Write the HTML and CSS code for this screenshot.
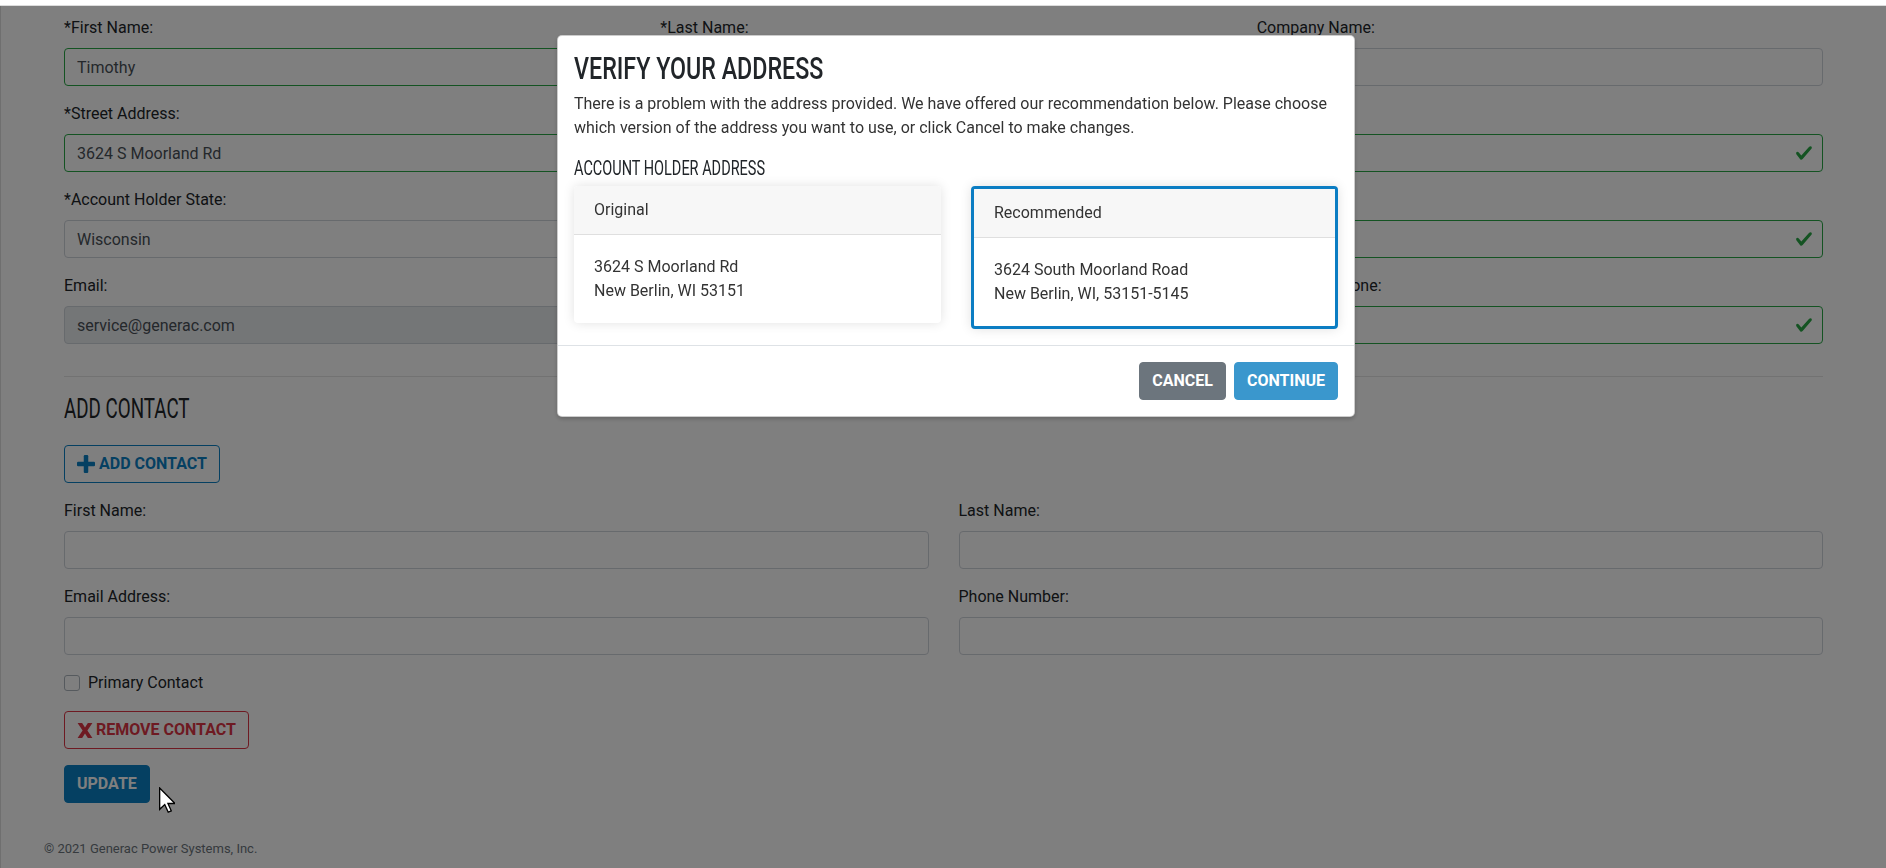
FILE: index.html
```html
<!DOCTYPE html>
<html lang="en">
<head>
  <meta charset="UTF-8">
  <meta name="viewport" content="width=device-width, initial-scale=1.0">
  <title>Account Holder - Update</title>
  <link rel="stylesheet" href="styles.css">
</head>
<body>

  <div class="topbar"></div>

  <div class="frame">
    <main class="page">
      <div class="grid-3">
        <div class="field">
          <label>*First Name:</label>
          <div class="input-wrap">
            <input class="control is-valid" type="text" value="Timothy" readonly>
            <svg class="check" viewBox="0 0 8 8"><path d="M2.3 6.73L.6 4.53c-.4-1.04.46-1.4 1.1-.8l1.1 1.4 3.4-3.8c.6-.63 1.6-.27 1.2.7l-4 4.6c-.43.5-.8.4-1.1.1z"/></svg>
          </div>
        </div>
        <div class="field">
          <label>*Last Name:</label>
          <div class="input-wrap">
            <input class="control is-valid" type="text" value="Smith" readonly>
          </div>
        </div>
        <div class="field">
          <label>Company Name:</label>
          <div class="input-wrap">
            <input class="control" type="text" value="" readonly>
          </div>
        </div>

        <div class="field">
          <label>*Street Address:</label>
          <div class="input-wrap">
            <input class="control is-valid" type="text" value="3624 S Moorland Rd" readonly>
            <svg class="check" viewBox="0 0 8 8"><path d="M2.3 6.73L.6 4.53c-.4-1.04.46-1.4 1.1-.8l1.1 1.4 3.4-3.8c.6-.63 1.6-.27 1.2.7l-4 4.6c-.43.5-.8.4-1.1.1z"/></svg>
          </div>
        </div>
        <div class="field">
          <label>Street Address 2:</label>
          <div class="input-wrap">
            <input class="control" type="text" value="" readonly>
          </div>
        </div>
        <div class="field">
          <label>*City:</label>
          <div class="input-wrap">
            <input class="control is-valid" type="text" value="New Berlin" readonly>
            <svg class="check" viewBox="0 0 8 8"><path d="M2.3 6.73L.6 4.53c-.4-1.04.46-1.4 1.1-.8l1.1 1.4 3.4-3.8c.6-.63 1.6-.27 1.2.7l-4 4.6c-.43.5-.8.4-1.1.1z"/></svg>
          </div>
        </div>

        <div class="field">
          <label>*Account Holder State:</label>
          <div class="input-wrap">
            <input class="control" type="text" value="Wisconsin" readonly>
          </div>
        </div>
        <div class="field">
          <label>*Country:</label>
          <div class="input-wrap">
            <input class="control" type="text" value="United States" readonly>
          </div>
        </div>
        <div class="field">
          <label>*Zip Code:</label>
          <div class="input-wrap">
            <input class="control is-valid" type="text" value="53151" readonly>
            <svg class="check" viewBox="0 0 8 8"><path d="M2.3 6.73L.6 4.53c-.4-1.04.46-1.4 1.1-.8l1.1 1.4 3.4-3.8c.6-.63 1.6-.27 1.2.7l-4 4.6c-.43.5-.8.4-1.1.1z"/></svg>
          </div>
        </div>

        <div class="field">
          <label>Email:</label>
          <div class="input-wrap">
            <input class="control is-disabled" type="text" value="service@generac.com" disabled>
          </div>
        </div>
        <div class="field">
          <label>Account Number:</label>
          <div class="input-wrap">
            <input class="control is-disabled" type="text" value="100245" disabled>
          </div>
        </div>
        <div class="field">
          <label>*Business Phone:</label>
          <div class="input-wrap">
            <input class="control is-valid" type="text" value="5444811" readonly>
            <svg class="check" viewBox="0 0 8 8"><path d="M2.3 6.73L.6 4.53c-.4-1.04.46-1.4 1.1-.8l1.1 1.4 3.4-3.8c.6-.63 1.6-.27 1.2.7l-4 4.6c-.43.5-.8.4-1.1.1z"/></svg>
          </div>
        </div>
      </div>

      <hr>

      <h2 class="section-title"><span>ADD CONTACT</span></h2>

      <button class="btn btn-outline add-btn">
        <svg class="btn-icon plus-icon" viewBox="0 0 16 16"><rect x="6" y="0" width="4" height="16" rx="1"/><rect x="0" y="6" width="16" height="4" rx="1"/></svg>
        Add Contact
      </button>

      <div class="grid-2">
        <div class="field">
          <label>First Name:</label>
          <input class="control" type="text">
        </div>
        <div class="field">
          <label>Last Name:</label>
          <input class="control" type="text">
        </div>
        <div class="field">
          <label>Email Address:</label>
          <input class="control" type="text">
        </div>
        <div class="field">
          <label>Phone Number:</label>
          <input class="control" type="text">
        </div>
      </div>

      <div class="actions">
        <label class="check-row"><input class="checkbox" type="checkbox"> Primary Contact</label>
        <button class="btn btn-outline-danger">
          <svg class="btn-icon x-icon" viewBox="0 0 14 13"><path d="M0.5 0h4l2.5 3.8L9.5 0h4L9.1 6.5 13.5 13h-4L7 9.2 4.5 13h-4l4.4-6.5z"/></svg>
          Remove Contact
        </button>
        <button class="btn btn-primary">Update</button>
      </div>
    </main>

    <footer class="footer">© 2021 Generac Power Systems, Inc.</footer>
  </div>

  <div class="backdrop"></div>

  <div class="modal">
    <div class="modal-body">
      <h1 class="modal-title"><span>VERIFY YOUR ADDRESS</span></h1>
      <p>There is a problem with the address provided. We have offered our recommendation below. Please choose which version of the address you want to use, or click Cancel to make changes.</p>
      <h3 class="subtitle"><span>ACCOUNT HOLDER ADDRESS</span></h3>
      <div class="address-row">
        <div class="card">
          <div class="card-header">Original</div>
          <div class="card-body">
            3624 S Moorland Rd<br>
            New Berlin, WI 53151
          </div>
        </div>
        <div class="card selected">
          <div class="card-header">Recommended</div>
          <div class="card-body">
            3624 South Moorland Road<br>
            New Berlin, WI, 53151-5145
          </div>
        </div>
      </div>
    </div>
    <div class="modal-footer">
      <button class="btn btn-secondary">Cancel</button>
      <button class="btn btn-info">Continue</button>
    </div>
  </div>

  <svg class="cursor" viewBox="0 0 12 19"><path d="M0.5 0.5v16l3.8-3.6 2.6 5.7 2.3-1-2.5-5.5h5.3z" fill="#fff" stroke="#000" stroke-width="1"/></svg>

</body>
</html>
```

FILE: styles.css
```css
* {
  box-sizing: border-box;
}

body {
  margin: 0;
  font-family: Roboto, 'Liberation Sans', Arial, sans-serif;
  font-size: 16px;
  line-height: 1.5;
  color: #212529;
  background: #fff;
}

.topbar {
  height: 6px;
  background: #fff;
  border-bottom: 1px solid #dcdcdc;
}

.frame {
  border-left: 1px solid #dedede;
  min-height: 862px;
}

.page {
  padding: 10px 63px 35px;
}

.grid-3 {
  display: grid;
  grid-template-columns: repeat(3, 1fr);
  column-gap: 30px;
}

.grid-2 {
  display: grid;
  grid-template-columns: repeat(2, 1fr);
  column-gap: 30px;
}

.field {
  margin-bottom: 16px;
}

.field label {
  display: block;
  margin-bottom: 8px;
  white-space: nowrap;
}

.input-wrap {
  position: relative;
}

.control {
  display: block;
  width: 100%;
  height: 38px;
  padding: 6px 12px;
  font: inherit;
  color: #495057;
  background: #fff;
  border: 1px solid #ced4da;
  border-radius: 4px;
  outline: none;
}

.control.is-valid {
  border-color: #28a745;
  padding-right: 36px;
}

.control.is-disabled {
  background: #e9ecef;
  opacity: 1;
}

.check {
  position: absolute;
  right: 10px;
  top: 10px;
  width: 18px;
  height: 18px;
  fill: #28a745;
}

hr {
  border: 0;
  border-top: 1px solid rgba(0, 0, 0, 0.1);
  margin: 16px 0;
}

/* condensed headings */
.section-title,
.modal-title,
.subtitle {
  margin: 0;
  font-weight: 400;
  white-space: nowrap;
}

.section-title span,
.modal-title span,
.subtitle span {
  display: inline-block;
  transform-origin: left center;
}

.section-title {
  font-size: 27px;
  line-height: 32px;
  margin-bottom: 20px;
}

.section-title span {
  transform: scaleX(0.695);
}

.btn {
  display: inline-flex;
  align-items: center;
  gap: 3px;
  padding: 6px 12px;
  font-family: inherit;
  font-size: 16px;
  font-weight: 700;
  line-height: 24px;
  text-transform: uppercase;
  border: 1px solid transparent;
  border-radius: 4px;
  background: none;
  cursor: pointer;
}

.btn-icon {
  width: 16px;
  height: 16px;
  fill: currentColor;
}

.plus-icon {
  width: 18px;
  height: 18px;
}

.x-icon {
  width: 16px;
  height: 15px;
}

.btn-outline {
  color: #0a80c4;
  border-color: #0a80c4;
}

.add-btn {
  gap: 4px;
  margin-bottom: 16px;
}

.btn-outline-danger {
  color: #dc3545;
  border-color: #dc3545;
}

.btn-primary {
  color: #fff;
  background: #0a80c4;
  border-color: #0a80c4;
}

.btn-secondary {
  color: #fff;
  background: #6c757d;
  border-color: #6c757d;
}

.btn-info {
  color: #fff;
  background: #3a97cd;
  border-color: #3a97cd;
}

.actions {
  display: flex;
  flex-direction: column;
  align-items: flex-start;
  gap: 16px;
}

.check-row {
  display: flex;
  align-items: center;
  gap: 8px;
}

.checkbox {
  appearance: none;
  width: 16px;
  height: 16px;
  margin: 0;
  background: #fff;
  border: 1px solid #adb5bd;
  border-radius: 3px;
}

.footer {
  padding-left: 43px;
  font-size: 13px;
  line-height: 21px;
  color: #6c757d;
}

/* modal */
.backdrop {
  position: fixed;
  top: 6px;
  left: 0;
  right: 0;
  bottom: 0;
  background: rgba(0, 0, 0, 0.5);
}

.modal {
  position: fixed;
  top: 35px;
  left: 557px;
  width: 798px;
  background: #fff;
  border: 1px solid rgba(0, 0, 0, 0.2);
  border-radius: 5px;
  box-shadow: 0 2px 4px rgba(0, 0, 0, 0.2);
}

.modal-body {
  padding: 16px;
}

.modal-title {
  font-size: 31px;
  line-height: 34px;
  font-weight: 500;
  margin-bottom: 6px;
}

.modal-title span {
  transform: scaleX(0.75);
}

.modal-body p {
  margin: 0 0 16px;
  color: #333;
}

.subtitle {
  font-size: 20px;
  line-height: 24px;
  margin-bottom: 6px;
}

.subtitle span {
  transform: scaleX(0.725);
}

.address-row {
  display: grid;
  grid-template-columns: 1fr 1fr;
  gap: 30px;
  align-items: start;
}

.card {
  background: #fff;
  border-radius: 4px;
  box-shadow: 0 0 12px rgba(0, 0, 0, 0.12);
  overflow: hidden;
  color: #333;
}

.card.selected {
  border: 3px solid #0b7dc3;
}

.card-header {
  padding: 12px 20px;
  background: #f7f7f7;
  border-bottom: 1px solid #dfdfdf;
}

.card-body {
  padding: 20px;
}

.modal-footer {
  display: flex;
  justify-content: flex-end;
  gap: 8px;
  padding: 16px;
  border-top: 1px solid #dee2e6;
}

.cursor {
  position: fixed;
  left: 159px;
  top: 787px;
  width: 16px;
  height: 26px;
}
```
